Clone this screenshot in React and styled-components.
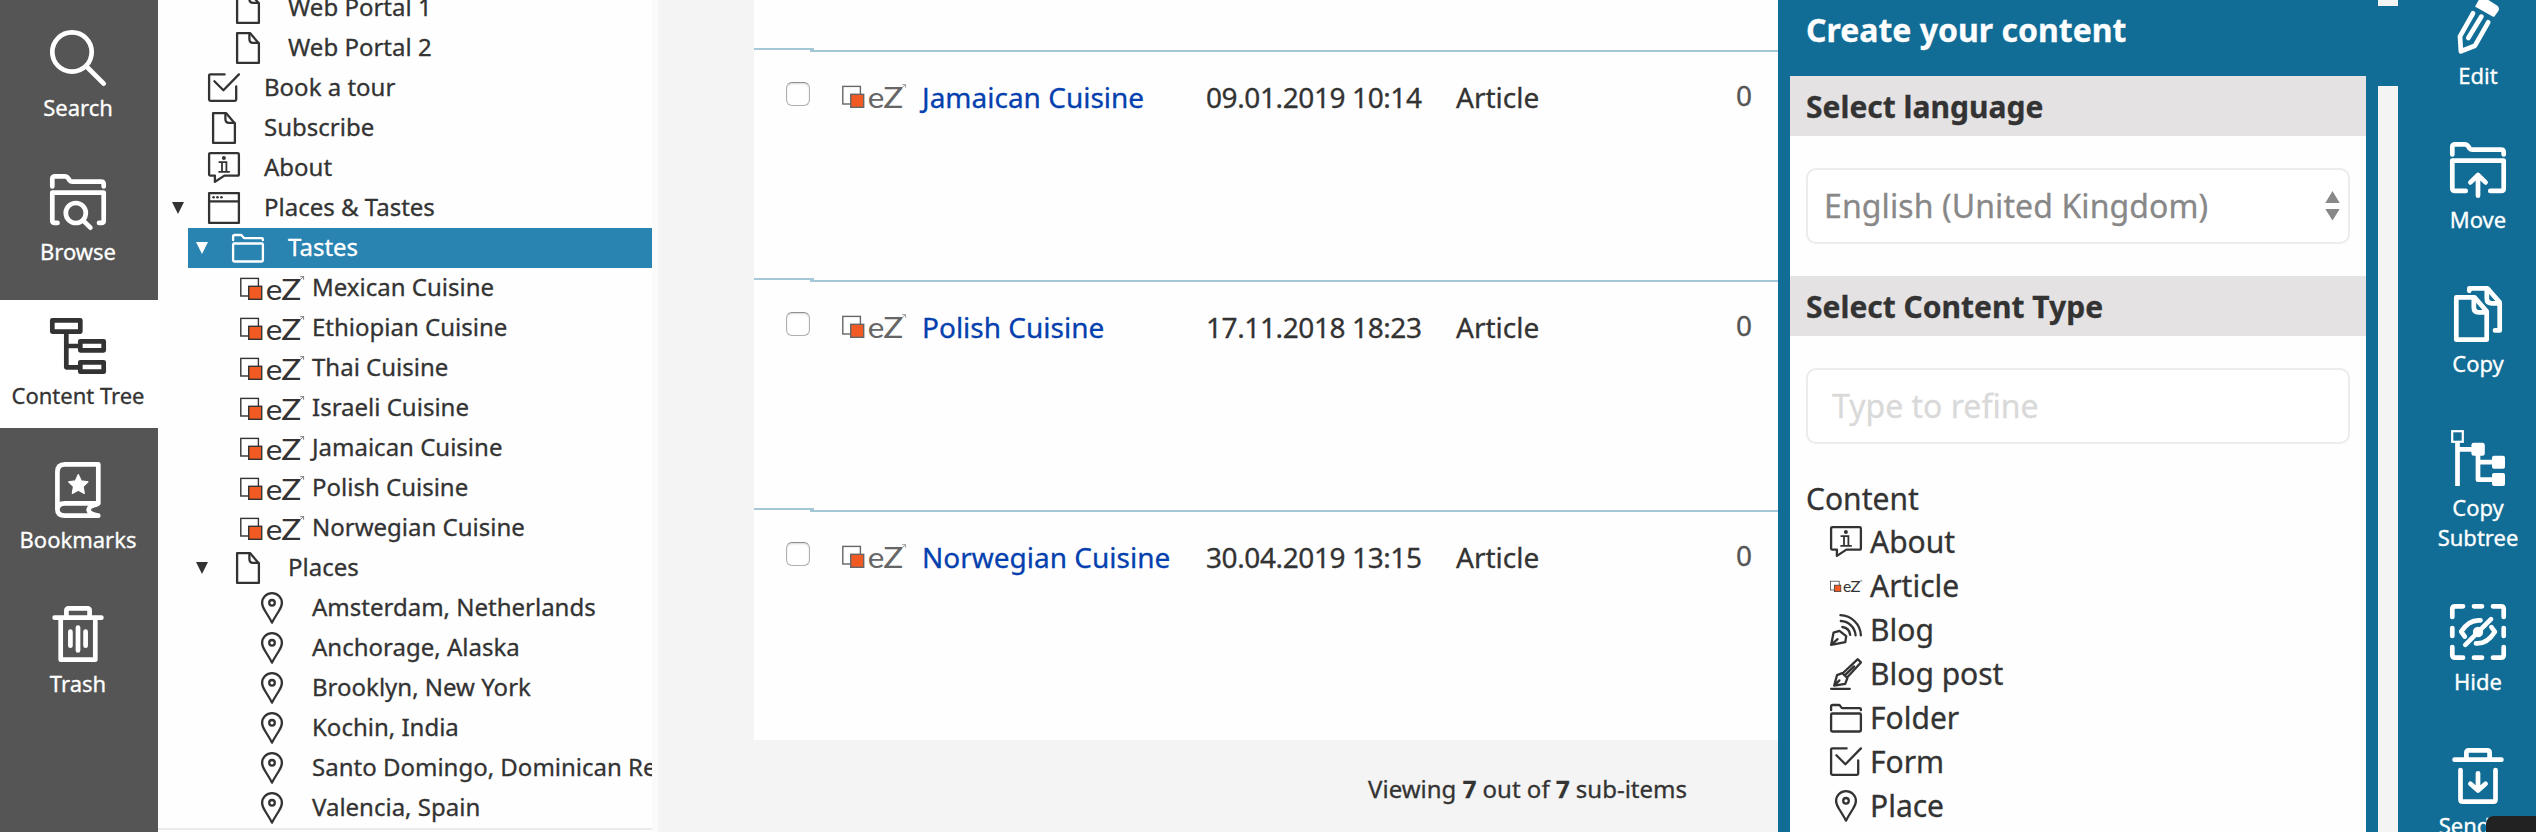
import React from "react";
import styled, { createGlobalStyle, css } from "styled-components";

const GlobalStyle = createGlobalStyle`
  *, *::before, *::after { box-sizing: border-box; }
  body {
    margin: 0;
    overflow: hidden;
    background: #f4f4f4;
    color: #333;
    font-family: "Noto Sans", sans-serif;
    -webkit-text-stroke: 0.3px currentColor;
  }
`;

/* ---------- icons ---------- */

const Svg = styled.svg`
  display: block;
  flex: none;
  width: ${(p) => p.$w || p.$size}px;
  height: ${(p) => p.$size}px;
  fill: none;
  stroke: currentColor;
  stroke-width: ${(p) => p.$stroke};
  stroke-linecap: round;
  stroke-linejoin: round;
  overflow: visible;
`;

const Big = ({ children }) => (
  <Svg viewBox="0 0 56 56" $size={56} $stroke={4.7}>{children}</Svg>
);
const Small = ({ children }) => (
  <Svg viewBox="0 0 32 32" $size={32} $stroke={2.3}>{children}</Svg>
);

const folderTab =
  "M2.3 12.4V5Q2.3 2.3 5 2.3H15Q17 2.3 18 4L19.6 6.4Q20.5 7.7 22.5 7.7H51Q53.7 7.7 53.7 10.3V12.4";

const bigIcons = {
  search: (
    <Big>
      <circle cx="22" cy="22" r="19.7" />
      <path d="M37 37L53.7 53.7" />
    </Big>
  ),
  browse: (
    <Big>
      <path d={folderTab} />
      <path d="M7.5 48.9H4.5Q2.3 48.9 2.3 46.5V18.6H53.7V46.5Q53.7 48.9 51.5 48.9H49" />
      <circle cx="25.8" cy="39" r="10" />
      <path d="M33.5 46.8L40.4 53.7" />
    </Big>
  ),
  tree: (
    <Big>
      <rect x="2.3" y="2.3" width="28" height="11.3" />
      <path d="M16.3 14V49.3H29M16.3 28H29" />
      <rect x="30.3" y="23.3" width="23.4" height="9" />
      <rect x="30.3" y="44.3" width="23.4" height="9.4" />
    </Big>
  ),
  bookmark: (
    <Big>
      <path d="M7.4 48V10Q7.4 2.3 15 2.3H48.3V41.4H15Q7.4 41.4 7.4 47.6Q7.4 53.7 15 53.7H48.3" />
      <path d="M46.5 42.5Q38.6 44.5 38.6 47.7Q38.6 51.5 46.5 53.2" />
      <path
        fill="currentColor"
        strokeWidth="1.2"
        d="M28.3 12.6L31.3 18.9L38 19.8L33.1 24.5L34.3 31.4L28.3 28.1L22.3 31.4L23.5 24.5L18.6 19.8L25.3 18.9Z"
      />
    </Big>
  ),
  trash: (
    <Big>
      <path d="M4.6 11.7H51.4M16.4 11V4.5Q16.4 2.3 18.6 2.3H37.4Q39.6 2.3 39.6 4.5V11" />
      <path d="M10.7 12V53.7H45.3V12M20.4 25.7V39.7M28 21.5V44.5M35.6 25.7V39.7" />
    </Big>
  ),
  edit: (
    <Big>
      <path fill="currentColor" strokeWidth="2" d="M30.5 1L26.3 8.2L43.6 17.8L47.6 12.5Q48.6 10 46.5 8.4L35 1Z" />
      <path d="M23 15.3L10 38.3L10.9 53.3L25 47.7L38.2 24.3M31.4 18.6L18.3 40" />
    </Big>
  ),
  move: (
    <Big>
      <path d={folderTab} />
      <path d="M15.7 48.9H4.7Q2.3 48.9 2.3 46.5V18.6H53.7V46.5Q53.7 48.9 51.3 48.9H40.3" />
      <path d="M28 53.7V33.2M20.4 40.4L28 33L35.6 40.4" />
    </Big>
  ),
  copy: (
    <Big>
      <path d="M6.3 11.4H24.5L36.7 25.2V53.7H6.3Z" />
      <path d="M23.8 12.4V21.5Q23.8 26.3 28.6 26.3H36" />
      <path d="M19.3 4.8V2.4H37.4L49.7 16.4V44.4H45" />
      <path d="M36.8 3.4V12.6Q36.8 17.3 41.5 17.3H49" />
    </Big>
  ),
  subtree: (
    <Big>
      <rect x="2.2" y="1.2" width="10.6" height="10.6" strokeWidth="2.2" strokeLinejoin="miter" />
      <path strokeLinecap="butt" d="M7.5 12.5V56M9 19.3H24M28 22V49.7H44M28 32.2H44" />
      <g fill="currentColor" strokeWidth="0">
        <rect x="21.4" y="12.8" width="13.4" height="13" rx="2.4" />
        <rect x="42" y="25.7" width="13" height="13" rx="2" />
        <rect x="42" y="43" width="13" height="13" rx="2" />
      </g>
    </Big>
  ),
  hide: (
    <Big>
      <path d="M2.3 13V5Q2.3 2.3 5 2.3H13M43 2.3H51Q53.7 2.3 53.7 5V13M53.7 43V51Q53.7 53.7 51 53.7H43M13 53.7H5Q2.3 53.7 2.3 51V43" />
      <path d="M24 2.3H32M24 53.7H32M2.3 24V32M53.7 24V32" />
      <path d="M30.5 16.4Q19 15.3 11.2 27.6L14.8 32.6M41.4 23.2L44.9 27.8Q37 40.3 26 39.4M41 15.2L15.3 40.8" />
      <circle cx="28" cy="28" r="5.2" fill="currentColor" strokeWidth="0" />
    </Big>
  ),
  sendTrash: (
    <Big>
      <path d="M4.6 11.7H51.4M16.4 11V4.5Q16.4 2.3 18.6 2.3H37.4Q39.6 2.3 39.6 4.5V11" />
      <path d="M10.5 22V51.5Q10.5 53.7 12.7 53.7H43.3Q45.5 53.7 45.5 51.5V22" />
      <path d="M28 25.3V42M20.4 35.8L28 42.6L35.6 35.8" />
    </Big>
  ),
};

const EzLogo = ({ width = 64, tone = "#333" }) => (
  <Svg viewBox="0 0 64 24" $w={width} $size={(width * 24) / 64} $stroke={1.4}>
    <g strokeLinejoin="miter" stroke={tone}>
      <rect x="0.8" y="2.4" width="17.6" height="17.6" fill="#fff" />
      <rect x="8.7" y="10.3" width="13" height="13" fill="#f15a22" />
    </g>
    <g fill={tone} stroke="none" fontFamily="Lato, sans-serif">
      <text x="25.8" y="23.7" fontSize="29.5" textLength="16.6" lengthAdjust="spacingAndGlyphs">e</text>
      <text x="41.2" y="24" fontSize="28.8" textLength="20" lengthAdjust="spacingAndGlyphs">Z</text>
    </g>
    <path stroke={tone} strokeWidth="0.6" d="M58.6 5L63.2 1M60.6 0.6H63.6V3.4" />
  </Svg>
);

const smallIcons = {
  page: (
    <Small>
      <path d="M5.1 1.1H18L26.9 11.4V30.9H5.1Z" />
      <path d="M17.4 1.6V7Q17.4 10.9 21 10.9H26.6" />
    </Small>
  ),
  form: (
    <Small>
      <path d="M16.6 2.4H2.4Q1.1 2.4 1.1 3.6V27.6Q1.1 28.9 2.4 28.9H27Q28.2 28.9 28.2 27.6V14.5" />
      <path d="M6.4 9.2L15.4 18.2L30.9 2.4" />
    </Small>
  ),
  about: (
    <Small>
      <path d="M2.4 1.1H29.6Q30.9 1.1 30.9 2.4V22.2Q30.9 23.6 29.6 23.6H16.4L6.9 29.9V23.6H2.4Q1.1 23.6 1.1 22.2V2.4Q1.1 1.1 2.4 1.1Z" />
      <circle cx="15.9" cy="6" r="2" fill="currentColor" strokeWidth="0" />
      <path strokeWidth="1.8" strokeLinecap="butt" strokeLinejoin="miter" d="M10.6 10.1H18.4V20M14 10.1V20M10.4 19.8H21.8" />
    </Small>
  ),
  site: (
    <Small>
      <rect x="1.1" y="1.1" width="29.8" height="29.8" />
      <path strokeLinecap="butt" d="M1.1 9.4H30.9" />
      <g fill="currentColor" strokeWidth="0">
        <circle cx="5.6" cy="5.3" r="1.3" />
        <circle cx="9.5" cy="5.3" r="1.3" />
        <circle cx="13.4" cy="5.3" r="1.3" />
      </g>
    </Small>
  ),
  folder: (
    <Small>
      <path d="M1.1 8.2V4.4Q1.1 3 2.6 3H8.6Q9.6 3 10.2 3.9L11.3 5.4Q11.8 6.1 12.8 6.1H29.5Q30.9 6.1 30.9 7.4V8.2" />
      <rect x="1.1" y="11.5" width="29.8" height="18" rx="1.2" />
    </Small>
  ),
  pin: (
    <Small>
      <path d="M16 30.6Q13.8 26.4 9.1 19Q6.1 14.2 6.1 11A9.9 9.9 0 0 1 25.9 11Q25.9 14.2 22.9 19Q18.2 26.4 16 30.6Z" />
      <circle cx="16" cy="10.8" r="2.8" />
    </Small>
  ),
  blog: (
    <Small>
      <path d="M1.1 30.9L3.6 18.6L9.4 16.8L16.2 22.2L15.3 28.2Z M1.6 30.4L7.6 25.2" />
      <path d="M10.4 1.2A21 21 0 0 1 30.9 21.4M10.8 7A15.4 15.4 0 0 1 25.6 21.4M12.4 13Q19.4 14 20.2 20.8" />
    </Small>
  ),
  blogPost: (
    <Small>
      <path d="M1.1 30.8H19.8M4.2 27.6L7 17.2L12.3 15.2L17.4 20L15.2 25.8Z M4.6 27.2L9.4 22.4" />
      <path d="M13 15L27.8 1.2L30.9 4.4L18 18.6M15.8 16.4L24 8.4" />
    </Small>
  ),
  article: <EzLogo width={32} />,
};

/* ---------- frame ---------- */

const Page = styled.div`
  display: flex;
  width: 2536px;
  height: 832px;
  overflow: hidden;
`;

const Sidebar = styled.nav`
  flex: none;
  display: flex;
  flex-direction: column;
  gap: 16px;
  width: 158px;
  padding-top: 12px;
  background: #555;
`;

const ActionBar = styled.nav`
  flex: none;
  display: flex;
  flex-direction: column;
  gap: 16px;
  width: 160px;
  margin: -20px -22px 0 0;
  background: #126d96;
`;

const NavItem = styled.a`
  flex: none;
  display: flex;
  flex-direction: column;
  align-items: center;
  gap: 6px;
  padding: 18px 0;
  color: #fff;
  ${Sidebar} & {
    padding-right: 2px;
  }
  ${(p) =>
    p.$active &&
    css`
      background: #fff;
      color: #333;
    `}
`;

const NavLabel = styled.span`
  max-width: ${(p) => p.$max || 158}px;
  font-size: 22px;
  line-height: 30px;
  text-align: center;
`;

const NavEntry = ({ icon, label, active, max }) => (
  <NavItem $active={active}>
    {bigIcons[icon]}
    <NavLabel $max={max}>{label}</NavLabel>
  </NavItem>
);

/* ---------- content tree ---------- */

const TreePanel = styled.aside`
  flex: none;
  width: 500px;
  background: #fafafa;
  padding-right: 6px;
`;

const TreeList = styled.div`
  height: 100%;
  overflow: hidden;
  background: #fefefe;
`;

const TreeScroll = styled.div`
  margin-top: -12px;
  border-bottom: 2px solid #eaeaea;
`;

const TreeRow = styled.div`
  display: flex;
  align-items: center;
  height: 40px;
  margin-left: ${(p) => 6 + p.$level * 24}px;
  padding-left: 8px;
  white-space: nowrap;
  ${(p) =>
    p.$selected &&
    css`
      background: #2a84b2;
      color: #fff;
    `}
`;

const Toggle = styled.span`
  flex: none;
  width: 36px;
  height: 12px;
  &::before {
    content: "";
    display: ${(p) => (p.$open ? "block" : "none")};
    border: solid transparent;
    border-width: 12px 6px 0;
    border-top-color: currentColor;
    width: 0;
  }
`;

const TreeIcon = styled.span`
  flex: none;
  width: ${(p) => (p.$logo ? 72 : 56)}px;
  margin-left: ${(p) => (p.$logo ? -16 : 0)}px;
`;

const TreeText = styled.span`
  height: 40px;
  font-size: 24px;
  line-height: 37px;
`;

const treeRows = [
  [1, "page", "Web Portal 1"],
  [1, "page", "Web Portal 2"],
  [0, "form", "Book a tour"],
  [0, "page", "Subscribe"],
  [0, "about", "About"],
  [0, "site", "Places & Tastes", true],
  [1, "folder", "Tastes", true, true],
  [2, "ez", "Mexican Cuisine"],
  [2, "ez", "Ethiopian Cuisine"],
  [2, "ez", "Thai Cuisine"],
  [2, "ez", "Israeli Cuisine"],
  [2, "ez", "Jamaican Cuisine"],
  [2, "ez", "Polish Cuisine"],
  [2, "ez", "Norwegian Cuisine"],
  [1, "page", "Places", true],
  [2, "pin", "Amsterdam, Netherlands"],
  [2, "pin", "Anchorage, Alaska"],
  [2, "pin", "Brooklyn, New York"],
  [2, "pin", "Kochin, India"],
  [2, "pin", "Santo Domingo, Dominican Republic"],
  [2, "pin", "Valencia, Spain"],
];

/* ---------- sub-items table ---------- */

const Main = styled.main`
  flex: none;
  width: 1120px;
  padding-left: 96px;
`;

const Table = styled.div`
  height: 740px;
  padding-top: 48px;
  background: #fefefe;
`;

const ItemRow = styled.div`
  display: flex;
  height: 230px;
  color: #333;
  font-size: 28px;
  line-height: 38px;
`;

const CheckCell = styled.div`
  flex: none;
  width: 60px;
  padding: 32px 0 0 32px;
  border-top: 2px solid #a5c8d6;
`;

const Checkbox = styled.span`
  display: block;
  width: 24px;
  height: 24px;
  border: 1.5px solid #b0b0b0;
  border-top-color: #8e8e8e;
  border-radius: 6px;
  background: #fff;
  box-shadow: inset 0 1px 2px rgba(0, 0, 0, 0.16);
`;

const ItemCells = styled.div`
  flex: 1;
  display: flex;
  margin: 2px 0 0 -4px;
  padding: 26px 0 0 32px;
  border-top: 2px solid #a5c8d6;
`;

const IconCell = styled.div`
  width: 80px;
  padding-top: 6px;
`;

const NameCell = styled.a`
  width: 284px;
  color: #0440ae;
`;

const DateCell = styled.div`
  width: 250px;
  letter-spacing: -0.4px;
`;

const TypeCell = styled.div`
  width: 280px;
`;

const PriorityCell = styled.div`
  margin-top: -2px;
  color: #555;
`;

const Footer = styled.div`
  padding: 32px 91px 0 0;
  font-size: 24px;
  line-height: 33px;
  text-align: right;
`;

const items = [
  ["Jamaican Cuisine", "09.01.2019 10:14"],
  ["Polish Cuisine", "17.11.2018 18:23"],
  ["Norwegian Cuisine", "30.04.2019 13:15"],
];

/* ---------- create panel ---------- */

const CreatePanel = styled.section`
  flex: none;
  width: 600px;
  padding: 0 12px;
  background: #126d96;
`;

const PanelTitle = styled.h2`
  height: 76px;
  margin: 0;
  padding: 8px 16px 0;
  color: #fff;
  font-size: 32px;
  font-weight: 700;
  line-height: 43px;
`;

const PanelBody = styled.div`
  height: 756px;
  overflow: hidden;
  background: #fefefe;
`;

const SectionTitle = styled.h3`
  height: 60px;
  margin: 0;
  padding: 10px 16px 0;
  background: #e4e2e3;
  font-size: 30px;
  font-weight: 700;
  line-height: 41px;
`;

const Field = styled.div`
  display: flex;
  align-items: center;
  justify-content: space-between;
  height: 76px;
  margin: 32px 16px;
  padding: ${(p) => (p.$placeholder ? "0 24px 1px" : "0 8px 1px 16px")};
  border: 2px solid #ececec;
  border-radius: 10px;
  background: #fff;
  color: ${(p) => (p.$placeholder ? "#d9d9d9" : "#888")};
  font-size: 32px;
  line-height: 43px;
  letter-spacing: ${(p) => (p.$placeholder ? "0" : "0.1px")};
`;

const Arrows = styled.svg`
  width: 15px;
  height: 30px;
  fill: currentColor;
`;

const GroupName = styled.div`
  height: 42px;
  margin-top: 34px;
  padding-left: 16px;
  font-size: 30px;
  line-height: 41px;
`;

const TypeRow = styled.div`
  display: flex;
  align-items: center;
  gap: 8px;
  height: 44px;
  padding-left: 40px;
  font-size: 30px;
  line-height: 44px;
`;

const types = [
  ["about", "About"],
  ["article", "Article"],
  ["blog", "Blog"],
  ["blogPost", "Blog post"],
  ["folder", "Folder"],
  ["form", "Form"],
  ["pin", "Place"],
];

const Gutter = styled.div`
  flex: none;
  width: 20px;
  padding-top: 6px;
  &::before {
    content: "";
    display: block;
    height: 80px;
    background: #126d96;
  }
`;

const ToolbarTab = styled.div`
  position: absolute;
  left: 2486px;
  top: 816px;
  width: 50px;
  height: 16px;
  border-top-left-radius: 8px;
  background: #222;
`;

export default function App() {
  return (
    <>
      <GlobalStyle />
      <Page>
        <Sidebar>
          <NavEntry icon="search" label="Search" />
          <NavEntry icon="browse" label="Browse" />
          <NavEntry icon="tree" label="Content Tree" active />
          <NavEntry icon="bookmark" label="Bookmarks" />
          <NavEntry icon="trash" label="Trash" />
        </Sidebar>

        <TreePanel>
          <TreeList>
            <TreeScroll>
              {treeRows.map(([level, icon, text, open, selected]) => (
                <TreeRow key={text} $level={level} $selected={selected}>
                  <Toggle $open={open} />
                  <TreeIcon $logo={icon === "ez"}>
                    {icon === "ez" ? <EzLogo /> : smallIcons[icon]}
                  </TreeIcon>
                  <TreeText>{text}</TreeText>
                </TreeRow>
              ))}
            </TreeScroll>
          </TreeList>
        </TreePanel>

        <Main>
          <Table>
            {items.map(([name, date]) => (
              <ItemRow key={name}>
                <CheckCell>
                  <Checkbox />
                </CheckCell>
                <ItemCells>
                  <IconCell>
                    <EzLogo tone="#666" />
                  </IconCell>
                  <NameCell>{name}</NameCell>
                  <DateCell>{date}</DateCell>
                  <TypeCell>Article</TypeCell>
                  <PriorityCell>0</PriorityCell>
                </ItemCells>
              </ItemRow>
            ))}
          </Table>
          <Footer>
            Viewing <b>7</b> out of <b>7</b> sub-items
          </Footer>
        </Main>

        <CreatePanel>
          <PanelTitle>Create your content</PanelTitle>
          <PanelBody>
            <SectionTitle>Select language</SectionTitle>
            <Field>
              English (United Kingdom)
              <Arrows viewBox="0 0 15 30">
                <path d="M7.5 0L14.7 12H0.3ZM7.5 29.5L14.7 18H0.3Z" />
              </Arrows>
            </Field>
            <SectionTitle>Select Content Type</SectionTitle>
            <Field $placeholder>Type to refine</Field>
            <GroupName>Content</GroupName>
            {types.map(([icon, label]) => (
              <TypeRow key={label}>
                {smallIcons[icon]}
                {label}
              </TypeRow>
            ))}
          </PanelBody>
        </CreatePanel>

        <Gutter />

        <ActionBar>
          <NavEntry icon="edit" label="Edit" />
          <NavEntry icon="move" label="Move" />
          <NavEntry icon="copy" label="Copy" />
          <NavEntry icon="subtree" label="Copy Subtree" max={110} />
          <NavEntry icon="hide" label="Hide" />
          <NavEntry icon="sendTrash" label="Send to Trash" max={110} />
        </ActionBar>
      </Page>
      <ToolbarTab />
    </>
  );
}
